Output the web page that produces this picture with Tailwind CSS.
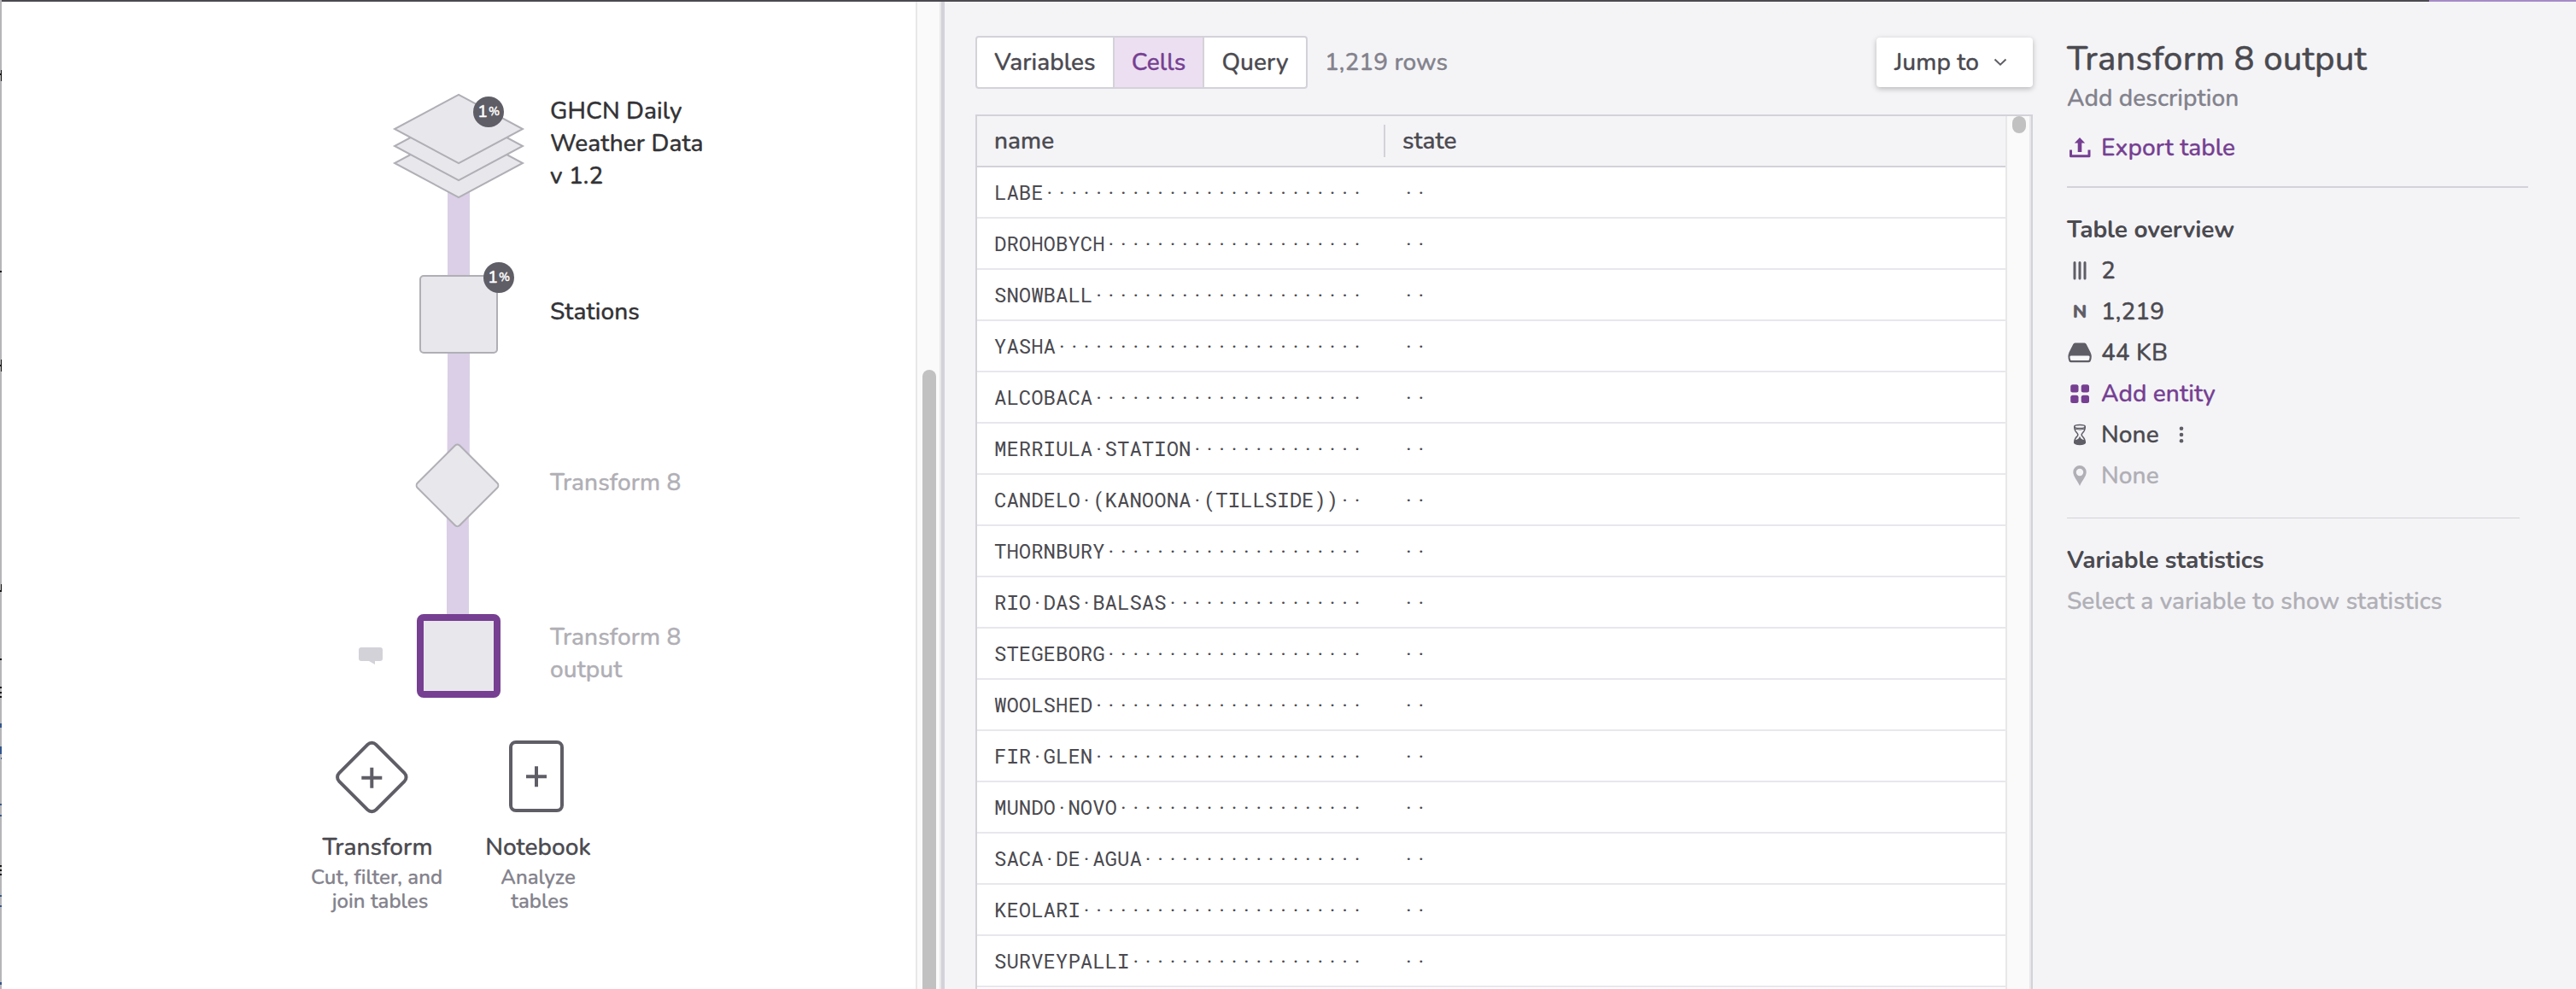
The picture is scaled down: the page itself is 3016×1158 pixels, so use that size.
<!DOCTYPE html>
<html lang="en">
<head>
<meta charset="utf-8">
<title>Transform 8 output</title>
<script src="https://cdn.jsdelivr.net/npm/@tailwindcss/browser@4"></script>
</head>
<body class="w-[3016px] h-[1158px] overflow-hidden flex bg-white font-['Nunito','Lato',sans-serif] font-medium tracking-[0.07px] [-webkit-text-stroke:0.35px_currentColor] text-[28px] leading-[38px] text-[#4b4a50]">

<!-- window edge -->
<svg class="w-[2px] h-[1158px] shrink-0 bg-[#b6b6b8]" viewBox="0 0 2 1158" shape-rendering="crispEdges">
  <path d="M0 86h2v2H0zM1 82h1v13h-1zM0 317h2v2H0zM0 427h2v2H0zM1 421h1v14h-1zM1 684h1v8h-1zM0 691h2v2H0zM0 771h2v2H0zM0 804h2v2H0zM0 810h2v2H0zM0 815h2v2H0zM0 1013h2v2H0zM0 1018h2v2H0zM0 1023h2v2H0z" fill="#111"/>
  <path d="M0 847h2v5H0zM0 874h2v9H0zM1 887h1v2h-1zM0 941h2v2H0zM0 954h2v2H0zM0 1048h2v2H0zM0 1060h2v2H0zM0 1150h2v3H0z" fill="#34558b"/>
</svg>

<div class="flex-1 flex flex-col min-w-0">
  <div class="flex h-[2px] shrink-0"><div class="flex-1 bg-[#4b4a50]"></div><div class="w-[172px] bg-[#a68bc6]"></div></div>

  <div class="flex flex-1 min-h-0">
    <!-- workflow canvas -->
    <main class="relative w-[1070px] shrink-0 bg-white">
      <svg class="absolute -left-[2px] -top-[2px] w-[1072px] h-[1158px]" viewBox="0 0 1072 1158">
        <path d="M524 200H550V430L549.7 568H523.4L524 430zM522.7 568H548.7L549 640V725H523V640z" fill="#dacfe6"/>
        <g fill="#e8e7ec" stroke="#b0afb5" stroke-width="2">
          <path d="M537 150.8 612 191 537 231.2 462 191z"/>
          <path d="M537 130.8 612 171 537 211.2 462 171z"/>
          <path d="M537 110.8 612 151 537 191.2 462 151z"/>
          <rect x="492" y="323" width="90" height="90" rx="4"/>
          <rect x="500.5" y="533.4" width="70" height="70" rx="4" transform="rotate(45 535.5 568.4)"/>
        </g>
        <rect x="492" y="723" width="90" height="90" rx="4" fill="#e8e7ec" stroke="#763f92" stroke-width="8"/>
        <path d="M423 758h22a3 3 0 0 1 3 3v10a3 3 0 0 1-3 3h-6v4l-7-4h-9a3 3 0 0 1-3-3v-10a3 3 0 0 1 3-3z" fill="#d3d2d9"/>
        <g fill="none" stroke="#5f5d66" stroke-width="4">
          <rect x="404.8" y="879.5" width="61" height="61" rx="7" transform="rotate(45 435.3 910)"/>
          <path d="M423.3 910.7h24M435.3 898.7v24"/>
          <rect x="598" y="869" width="60" height="80" rx="6"/>
          <path d="M616 909.3h24M628 897.3v24"/>
        </g>
      </svg>
      <div class="absolute left-[552px] top-[111px] size-9 rounded-full bg-[#5f5d66] text-white flex items-center justify-center gap-px text-[20px] leading-none">1<span class="text-[14px]">%</span></div>
      <div class="absolute left-[564px] top-[305px] size-9 rounded-full bg-[#5f5d66] text-white flex items-center justify-center gap-px text-[20px] leading-none">1<span class="text-[14px]">%</span></div>

      <div class="absolute left-[642px] top-[109px] w-[200px] text-[#333336]">GHCN Daily<br>Weather Data<br>v 1.2</div>
      <div class="absolute left-[642px] top-[344px] w-[200px] text-[#333336]">Stations</div>
      <div class="absolute left-[642px] top-[544px] w-[200px] text-[#b0afb5]">Transform 8</div>
      <div class="absolute left-[642px] top-[725px] w-[200px] text-[#b0afb5]">Transform 8<br>output</div>

      <div class="absolute left-[340px] top-[971px] w-[200px] text-center">Transform
        <p class="text-[24px] leading-[28px] text-[#83828c] mt-[2px] pr-[2px]">Cut, filter, and<br><span class="pl-2">join tables</span></p>
      </div>
      <div class="absolute left-[528px] top-[971px] w-[200px] text-center">Notebook
        <p class="text-[24px] leading-[28px] text-[#83828c] mt-[2px]">Analyze<br><span class="pl-1">tables</span></p>
      </div>
    </main>

    <!-- canvas scrollbar -->
    <div class="w-[30px] shrink-0 bg-[#fafafa] border-x-2 border-[#e8e8e8] pt-[431px] px-[6px] overflow-hidden">
      <div class="w-4 h-[800px] rounded-full bg-[#c1c1c1]"></div>
    </div>

    <!-- table panel -->
    <section class="flex-1 flex bg-[#f4f4f7] border-l-4 border-[#d3d2d9] pl-9 min-w-0">
      <div class="w-[1238px] shrink-0 flex flex-col pt-10">
        <div class="flex items-center h-[62px] shrink-0">
          <div class="flex h-[62px] items-stretch bg-white border-2 border-[#d3d2d9] rounded-[4px] text-center leading-[58px]">
            <div class="w-[161px] border-r-2 border-[#d3d2d9]">Variables</div>
            <div class="w-[105px] border-r-2 border-[#d3d2d9] bg-[#ecdff1] text-[#763f92]">Cells</div>
            <div class="w-[119px]">Query</div>
          </div>
          <div class="ml-5 text-[#83828c]">1,219 rows</div>
          <div class="ml-auto w-[183px] h-[58px] bg-white rounded-[4px] shadow-[0_2px_6px_rgba(0,0,0,0.25)] flex items-center pl-[21px] gap-[17px]">Jump to
            <svg class="w-4 h-3" viewBox="0 0 16 12" fill="none" stroke="#5f5d66" stroke-width="2"><path d="M1.5 2.5 8 8.700l6.500-6.200"/></svg>
          </div>
        </div>

        <div class="mt-[30px] flex-1 min-h-0 overflow-hidden border-2 border-b-0 border-[#d3d2d9] flex">
          <div class="flex-1">
            <div class="flex items-center h-[60px] border-b-2 border-[#d3d2d9]">
              <div class="w-[478px] h-[38px] pl-5 border-r-2 border-[#d3d2d9] leading-[38px]">name</div>
              <div class="pl-5">state</div>
            </div>
            <div id="rows" class="font-['Roboto_Mono','Liberation_Mono',monospace] font-normal tracking-normal [-webkit-text-stroke:0] text-[24px] leading-[58px]"></div>
          </div>
          <div class="w-[30px] bg-[#fafafa] border-x-2 border-[#e8e8e8] px-[6px]"><div class="w-4 h-5 rounded-full bg-[#c1c1c1]"></div></div>
        </div>
      </div>

      <!-- details -->
      <aside class="ml-10 w-[540px] shrink-0 pt-10">
        <h1 class="text-[40px] leading-[54px] tracking-[0.15px]">Transform 8 output</h1>
        <div class="text-[#83828c]">Add description</div>
        <div class="mt-5 flex items-center gap-[10px] text-[#763f92]">
          <svg class="w-[30px] h-[30px]" viewBox="0 0 30 30"><path d="M15 3l6.200 6.600H17.300V20H12.700V9.600H8.800z" fill="#763f92"/><path d="M4.500 17.500v7.300h21.500v-7.300" fill="none" stroke="#763f92" stroke-width="3" stroke-linejoin="round"/></svg>
          Export table
        </div>
        <div class="mt-[26px] h-[2px] bg-[#d3d2d9]"></div>
        <h2 class="mt-[30px] font-bold tracking-[-0.07px] [-webkit-text-stroke:0]">Table overview</h2>
        <ul class="mt-[5px] leading-[48px] [&>li]:flex [&>li]:items-center [&>li]:h-12 [&>li]:gap-[10px]">
          <li><svg class="w-[30px] h-[30px]" viewBox="0 0 30 30"><path d="M9 5.500v18.500M15 5.500v18.500M21 5.500v18.500" stroke="#5f5d66" stroke-width="3" stroke-linecap="round"/></svg>2</li>
          <li><span class="w-[30px] text-center text-[22px] font-extrabold text-[#5f5d66]">N</span>1,219</li>
          <li><svg class="w-[30px] h-[30px]" viewBox="0 0 30 30"><path d="M9.500 3.500h11q1.500 0 2.200 1.500l4.800 9.500q1.300 3 1.300 4.500 0 2.500-.8 5-.6 2.200-2.500 2.200h-21Q2.600 26.200 2.200 24q-.8-2.500-.8-5 0-1.500 1.100-4.500L7.300 5q.7-1.500 2.200-1.500z" fill="#5f5d66"/><path d="M4.800 18.400h20.400q1.600 0 1.400 1.600l-.5 2.700q-.2 1.300-1.500 1.300H5.400q-1.300 0-1.500-1.300L3.400 20q-.2-1.600 1.400-1.600z" fill="#f9f9fb"/></svg>44 KB</li>
          <li class="text-[#763f92]"><svg class="w-[30px] h-[30px]" viewBox="0 0 30 30" fill="#763f92"><rect x="4.200" y="4.200" width="9.300" height="9.300" rx="2.500"/><rect x="16.700" y="4.200" width="9.300" height="9.300" rx="2.500"/><rect x="4.200" y="16.700" width="9.300" height="9.300" rx="2.500"/><rect x="16.700" y="16.700" width="9.300" height="9.300" rx="2.500"/></svg>Add entity</li>
          <li><svg class="w-[30px] h-[30px]" viewBox="0 0 30 30" fill="none" stroke="#5f5d66" stroke-width="1.500"><path d="M8.800 5.500C8.500 9.500 9.500 11 12 13.200q1.600 1.800 0 3.600C9.500 19 8.500 20.500 8.800 24.500M21.200 5.500C21.500 9.500 20.500 11 18 13.200q-1.600 1.800 0 3.600 3.500 3.200 3.200 7.700"/><ellipse cx="15" cy="5.500" rx="6.300" ry="2"/><path d="M9.500 8.300q5.500 1.500 11 0" stroke-width="1"/><path d="M8.700 24.500q0-2.500 3.300-3.300 2-.7 3-2.700 1 2 3 2.700 3.300.8 3.300 3.300-1 2-6.300 2t-6.300-2z" fill="#5f5d66"/></svg>None
            <svg class="ml-[10px] w-3 h-6" viewBox="0 0 12 24" fill="#5f5d66"><circle cx="6" cy="4.700" r="2.300"/><circle cx="6" cy="12" r="2.300"/><circle cx="6" cy="19.300" r="2.300"/></svg></li>
          <li class="text-[#b0afb5]"><svg class="w-[30px] h-[30px]" viewBox="0 0 30 30"><path fill-rule="evenodd" d="M15 3a7.700 7.700 0 0 1 7.700 7.700c0 5-4.700 9.300-7.700 16.300-3-7-7.700-11.300-7.700-16.300A7.700 7.700 0 0 1 15 3zm0 3.800a4.200 4.200 0 1 0 0 8.400 4.200 4.200 0 0 0 0-8.400z" fill="#b0afb5"/></svg>None</li>
        </ul>
        <div class="mt-[25px] w-[530px] h-px bg-[#d3d2d9]"></div>
        <h2 class="mt-[30px] font-bold tracking-[-0.07px] [-webkit-text-stroke:0]">Variable statistics</h2>
        <div class="mt-[10px] text-[#b0afb5]">Select a variable to show statistics</div>
      </aside>
    </section>
  </div>
</div>

<script>
  // Trailing and inner spaces of the fixed-width strings are shown as middle dots.
  const names = ["LABE", "DROHOBYCH", "SNOWBALL", "YASHA", "ALCOBACA", "MERRIULA STATION", "CANDELO (KANOONA (TILLSIDE))", "THORNBURY", "RIO DAS BALSAS", "STEGEBORG", "WOOLSHED", "FIR GLEN", "MUNDO NOVO", "SACA DE AGUA", "KEOLARI", "SURVEYPALLI", ""];
  const visible = (s, n) => s.padEnd(n).replaceAll(" ", "\u00b7");
  document.getElementById("rows").innerHTML = names.map(n =>
    `<div class="flex h-[60px] bg-white border-b-2 border-[#e8e7ec]"><div class="w-[478px] pl-5">${n && visible(n, 30)}</div><div class="pl-5">${n && visible("", 2)}</div></div>`).join("");
</script>
</body>
</html>
